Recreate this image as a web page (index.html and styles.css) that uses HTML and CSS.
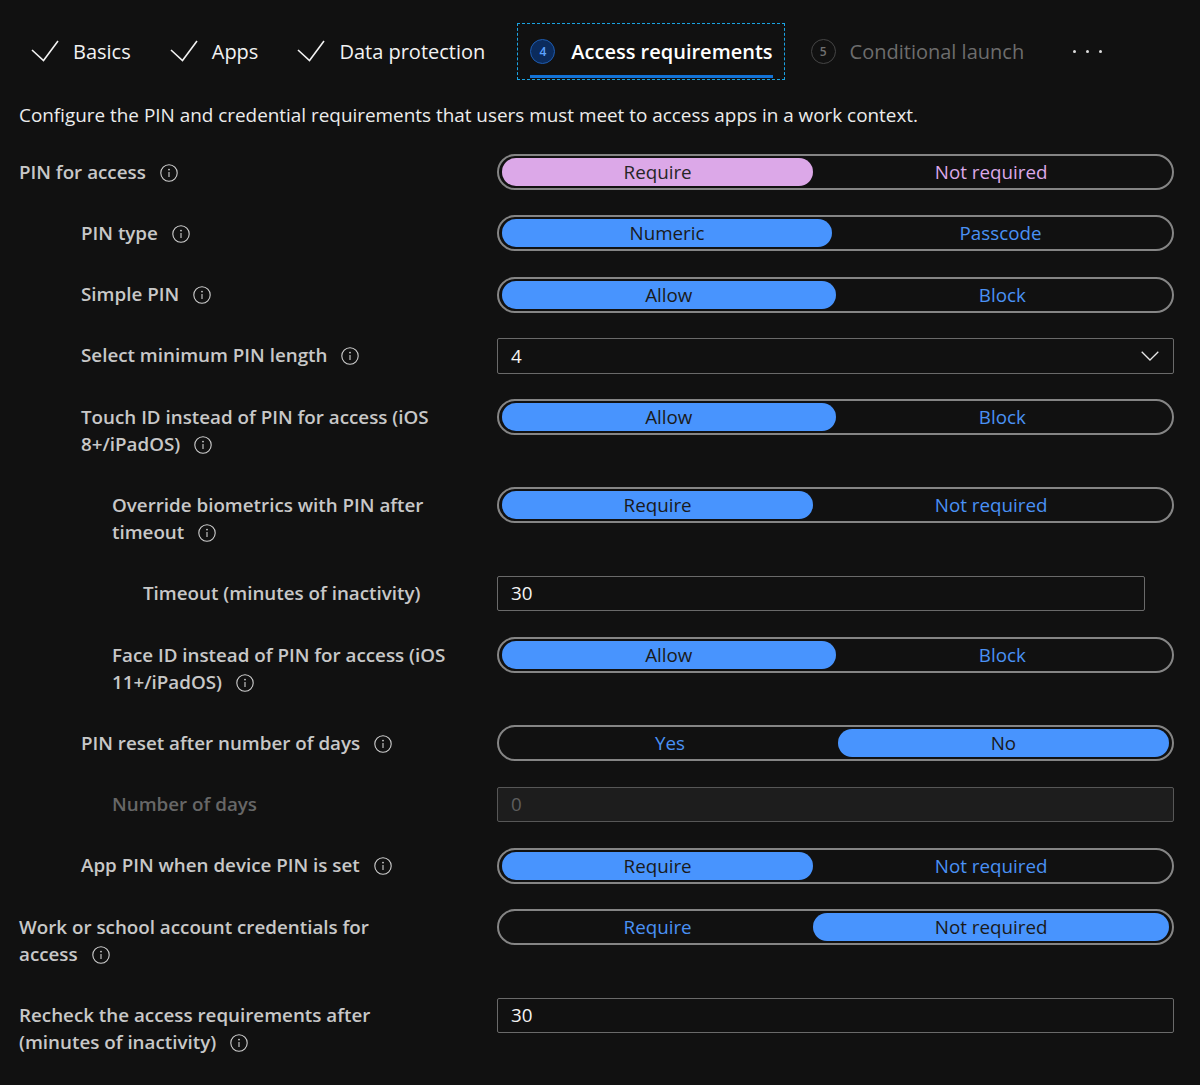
FILE: index.html
```html
<!DOCTYPE html>
<html lang="en">
<head>
<meta charset="utf-8">
<title>Access requirements</title>
<link rel="stylesheet" href="styles.css">
</head>
<body>
<div class="page">
  <nav class="tabs">
    <div class="tab done">
      <svg class="check" width="28" height="22" viewBox="0 0 28 22"><polyline points="1,10 12.5,20.5 27,1" fill="none" stroke="#f2f2f2" stroke-width="1.6"/></svg>
      <span>Basics</span>
    </div>
    <div class="tab done">
      <svg class="check" width="28" height="22" viewBox="0 0 28 22"><polyline points="1,10 12.5,20.5 27,1" fill="none" stroke="#f2f2f2" stroke-width="1.6"/></svg>
      <span>Apps</span>
    </div>
    <div class="tab done">
      <svg class="check" width="28" height="22" viewBox="0 0 28 22"><polyline points="1,10 12.5,20.5 27,1" fill="none" stroke="#f2f2f2" stroke-width="1.6"/></svg>
      <span>Data protection</span>
    </div>
    <div class="tab current">
      <span class="step">4</span>
      <span>Access requirements</span>
    </div>
    <div class="tab future">
      <span class="step">5</span>
      <span>Conditional launch</span>
    </div>
    <div class="more"><i></i><i></i><i></i></div>
  </nav>

  <p class="desc">Configure the PIN and credential requirements that users must meet to access apps in a work context.</p>

  <div class="form">
    <div class="row">
      <div class="label l0"><div class="lt">PIN for <span class="nw">access<svg class="info" width="18" height="18" viewBox="0 0 18 18"><circle cx="9" cy="9" r="8.2" fill="none" stroke="#cfcfcf" stroke-width="1.1"/><circle cx="9" cy="5.6" r="0.9" fill="#cfcfcf"/><line x1="9" y1="8" x2="9" y2="13" stroke="#cfcfcf" stroke-width="1.1"/></svg></span></div></div>
      <div class="seg pink"><span class="opt on">Require</span><span class="opt">Not required</span></div>
    </div>

    <div class="row">
      <div class="label l1"><div class="lt">PIN <span class="nw">type<svg class="info" width="18" height="18" viewBox="0 0 18 18"><circle cx="9" cy="9" r="8.2" fill="none" stroke="#cfcfcf" stroke-width="1.1"/><circle cx="9" cy="5.6" r="0.9" fill="#cfcfcf"/><line x1="9" y1="8" x2="9" y2="13" stroke="#cfcfcf" stroke-width="1.1"/></svg></span></div></div>
      <div class="seg"><span class="opt on">Numeric</span><span class="opt">Passcode</span></div>
    </div>

    <div class="row">
      <div class="label l1"><div class="lt">Simple <span class="nw">PIN<svg class="info" width="18" height="18" viewBox="0 0 18 18"><circle cx="9" cy="9" r="8.2" fill="none" stroke="#cfcfcf" stroke-width="1.1"/><circle cx="9" cy="5.6" r="0.9" fill="#cfcfcf"/><line x1="9" y1="8" x2="9" y2="13" stroke="#cfcfcf" stroke-width="1.1"/></svg></span></div></div>
      <div class="seg"><span class="opt on">Allow</span><span class="opt">Block</span></div>
    </div>

    <div class="row">
      <div class="label l1"><div class="lt">Select minimum PIN <span class="nw">length<svg class="info" width="18" height="18" viewBox="0 0 18 18"><circle cx="9" cy="9" r="8.2" fill="none" stroke="#cfcfcf" stroke-width="1.1"/><circle cx="9" cy="5.6" r="0.9" fill="#cfcfcf"/><line x1="9" y1="8" x2="9" y2="13" stroke="#cfcfcf" stroke-width="1.1"/></svg></span></div></div>
      <div class="select"><span>4</span><svg width="18" height="10" viewBox="0 0 18 10"><polyline points="0.7,0.7 9,9 17.3,0.7" fill="none" stroke="#e6e6e6" stroke-width="1.3"/></svg></div>
    </div>

    <div class="row">
      <div class="label l1"><div class="lt">Touch ID instead of PIN for access (iOS <span class="nw">8+/iPadOS)<svg class="info" width="18" height="18" viewBox="0 0 18 18"><circle cx="9" cy="9" r="8.2" fill="none" stroke="#cfcfcf" stroke-width="1.1"/><circle cx="9" cy="5.6" r="0.9" fill="#cfcfcf"/><line x1="9" y1="8" x2="9" y2="13" stroke="#cfcfcf" stroke-width="1.1"/></svg></span></div></div>
      <div class="seg"><span class="opt on">Allow</span><span class="opt">Block</span></div>
    </div>

    <div class="row">
      <div class="label l2"><div class="lt">Override biometrics with PIN after <span class="nw">timeout<svg class="info" width="18" height="18" viewBox="0 0 18 18"><circle cx="9" cy="9" r="8.2" fill="none" stroke="#cfcfcf" stroke-width="1.1"/><circle cx="9" cy="5.6" r="0.9" fill="#cfcfcf"/><line x1="9" y1="8" x2="9" y2="13" stroke="#cfcfcf" stroke-width="1.1"/></svg></span></div></div>
      <div class="seg"><span class="opt on">Require</span><span class="opt">Not required</span></div>
    </div>

    <div class="row">
      <div class="label l3"><div class="lt">Timeout (minutes of inactivity)</div></div>
      <div class="input short">30</div>
    </div>

    <div class="row">
      <div class="label l2"><div class="lt">Face ID instead of PIN for access (iOS <span class="nw">11+/iPadOS)<svg class="info" width="18" height="18" viewBox="0 0 18 18"><circle cx="9" cy="9" r="8.2" fill="none" stroke="#cfcfcf" stroke-width="1.1"/><circle cx="9" cy="5.6" r="0.9" fill="#cfcfcf"/><line x1="9" y1="8" x2="9" y2="13" stroke="#cfcfcf" stroke-width="1.1"/></svg></span></div></div>
      <div class="seg"><span class="opt on">Allow</span><span class="opt">Block</span></div>
    </div>

    <div class="row">
      <div class="label l1"><div class="lt">PIN reset after number of <span class="nw">days<svg class="info" width="18" height="18" viewBox="0 0 18 18"><circle cx="9" cy="9" r="8.2" fill="none" stroke="#cfcfcf" stroke-width="1.1"/><circle cx="9" cy="5.6" r="0.9" fill="#cfcfcf"/><line x1="9" y1="8" x2="9" y2="13" stroke="#cfcfcf" stroke-width="1.1"/></svg></span></div></div>
      <div class="seg"><span class="opt">Yes</span><span class="opt on">No</span></div>
    </div>

    <div class="row">
      <div class="label l2 disabled"><div class="lt">Number of days</div></div>
      <div class="input off">0</div>
    </div>

    <div class="row">
      <div class="label l1"><div class="lt">App PIN when device PIN is <span class="nw">set<svg class="info" width="18" height="18" viewBox="0 0 18 18"><circle cx="9" cy="9" r="8.2" fill="none" stroke="#cfcfcf" stroke-width="1.1"/><circle cx="9" cy="5.6" r="0.9" fill="#cfcfcf"/><line x1="9" y1="8" x2="9" y2="13" stroke="#cfcfcf" stroke-width="1.1"/></svg></span></div></div>
      <div class="seg"><span class="opt on">Require</span><span class="opt">Not required</span></div>
    </div>

    <div class="row">
      <div class="label l0"><div class="lt">Work or school account credentials for <span class="nw">access<svg class="info" width="18" height="18" viewBox="0 0 18 18"><circle cx="9" cy="9" r="8.2" fill="none" stroke="#cfcfcf" stroke-width="1.1"/><circle cx="9" cy="5.6" r="0.9" fill="#cfcfcf"/><line x1="9" y1="8" x2="9" y2="13" stroke="#cfcfcf" stroke-width="1.1"/></svg></span></div></div>
      <div class="seg"><span class="opt">Require</span><span class="opt on">Not required</span></div>
    </div>

    <div class="row">
      <div class="label l0"><div class="lt">Recheck the access requirements after <span class="nw">(minutes of inactivity)<svg class="info" width="18" height="18" viewBox="0 0 18 18"><circle cx="9" cy="9" r="8.2" fill="none" stroke="#cfcfcf" stroke-width="1.1"/><circle cx="9" cy="5.6" r="0.9" fill="#cfcfcf"/><line x1="9" y1="8" x2="9" y2="13" stroke="#cfcfcf" stroke-width="1.1"/></svg></span></div></div>
      <div class="input">30</div>
    </div>
  </div>
</div>
</body>
</html>
```
FILE: styles.css
```css
html, body {
  margin: 0;
  padding: 0;
  background: #111111;
}

body {
  font-family: "Open Sans", "Noto Sans", sans-serif;
  color: #e8e8e8;
}

.page {
  padding: 24px 0 0 19px;
}

/* ---------- wizard tabs ---------- */
.tabs {
  display: flex;
  align-items: center;
  gap: 15px;
  height: 55px;
}

.tab {
  display: flex;
  align-items: center;
  gap: 14px;
  height: 55px;
  box-sizing: border-box;
  padding: 0 12px;
  font-size: 20px;
  color: #f2f2f2;
  position: relative;
}

.tab.done .check {
  display: block;
  margin-top: -1px;
}

.tab.current {
  gap: 16px;
  font-weight: 600;
  color: #ffffff;
  outline: 1px dashed #1ba3e3;
  padding-right: 11px;
  margin-left: 6px;
}

.tab.current::after {
  content: "";
  position: absolute;
  left: 12px;
  right: 11px;
  bottom: 1px;
  height: 3px;
  background: #1473d6;
}

.step {
  width: 25px;
  height: 25px;
  box-sizing: border-box;
  border-radius: 50%;
  display: flex;
  align-items: center;
  justify-content: center;
  font-size: 12px;
  font-weight: 600;
  line-height: 1;
}

.tab.current .step {
  background: #0b2b5c;
  border: 1px solid #1e5cb0;
  color: #5ea3ff;
}

.tab.future {
  color: #6d6d6d;
}

.tab.future .step {
  border: 1px solid #454545;
  color: #707070;
}

.more {
  display: flex;
  gap: 10px;
  margin-left: 22px;
}

.more i {
  display: block;
  width: 3px;
  height: 3px;
  border-radius: 50%;
  background: #dddddd;
}

/* ---------- description ---------- */
.desc {
  margin: 23px 0 0 0;
  font-size: 18.9px;
  line-height: 26px;
  color: #ececec;
}

/* ---------- form ---------- */
.form {
  margin-top: 26px;
  display: flex;
  flex-direction: column;
  gap: 25.3px;
}

.row {
  display: grid;
  grid-template-columns: 478px 677px;
  align-items: start;
}

.label {
  padding-top: 4.5px;
  padding-bottom: 4.5px;
  font-size: 18.8px;
  line-height: 27px;
  font-weight: 600;
  color: #c8c8c8;
}

.label .lt {
  max-width: 372px;
}

.label.l1 { padding-left: 62px; }
.label.l2 { padding-left: 93px; }
.label.l3 { padding-left: 124px; }

.label.disabled {
  color: #676767;
}

.nw {
  white-space: nowrap;
}

.info {
  display: inline-block;
  vertical-align: -3px;
  margin-left: 14px;
}

/* segmented toggle */
.seg {
  display: flex;
  height: 36px;
  box-sizing: border-box;
  border: 2px solid #858585;
  border-radius: 18px;
  padding: 2px 3px;
}

.opt {
  flex: 1 1 auto;
  text-align: center;
  border-radius: 14px;
  font-size: 18.8px;
  line-height: 28px;
  color: #4a91f5;
}

.opt.on {
  background: #4894fe;
  color: #1a1a1a;
}

.seg.pink .opt {
  color: #dca8e8;
}

.seg.pink .opt.on {
  background: #dca8e8;
  color: #262626;
}

/* dropdown and inputs */
.select,
.input {
  height: 36px;
  box-sizing: border-box;
  border: 1px solid #6a6a6a;
  border-radius: 2px;
  display: flex;
  align-items: center;
  padding: 0 14px 0 13px;
  font-size: 18.8px;
  color: #f4f4f4;
}

.select {
  justify-content: space-between;
}

.input {
  height: 35px;
}

.input.short {
  width: 648px;
}

.input.off {
  background: #1d1d1d;
  border-color: #575757;
  color: #5e5e5e;
}
```
